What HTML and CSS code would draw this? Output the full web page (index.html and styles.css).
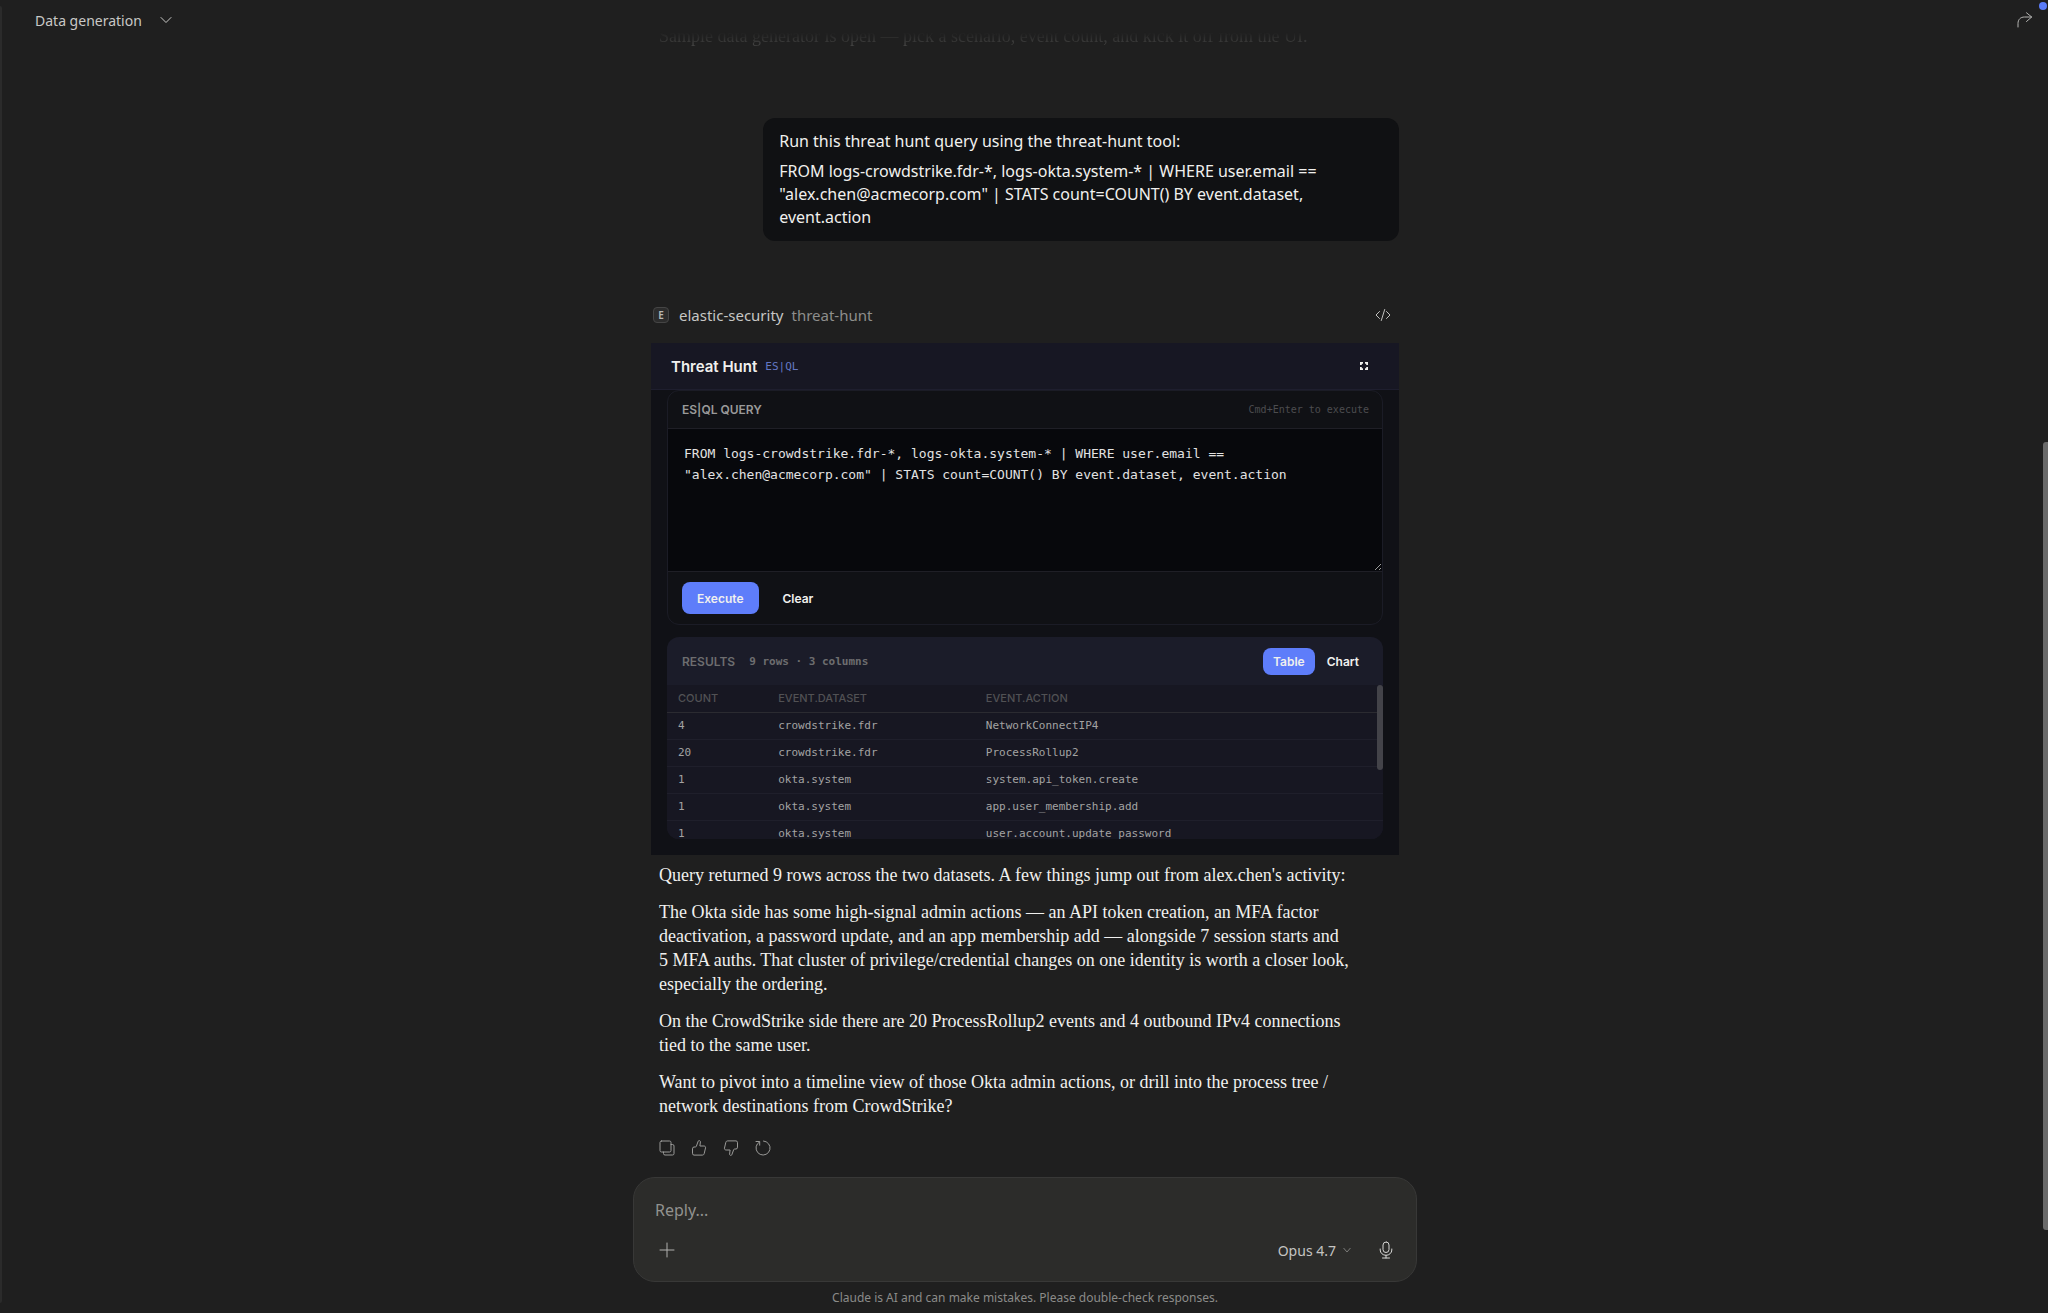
FILE: index.html
```html
<!DOCTYPE html>
<html lang="en">

<head>
  <meta charset="UTF-8">
  <meta name="viewport" content="width=device-width, initial-scale=1.0">
  <title>Data generation</title>
  <link rel="stylesheet" href="styles.css">
</head>

<body>
  <div class="sidebar-edge"></div>

  <header class="topbar">
    <button class="chat-title">
      Data generation
      <svg width="12" height="12" viewBox="0 0 12 12"><path d="M1 3.500l5 5 5-5" /></svg>
    </button>
    <button class="share" aria-label="Share">
      <svg width="16" height="16" viewBox="0 0 16 16"><path d="M1 15V11.500C1 7.500 3.500 5 7.500 5H14.500M9.500 .8L14.700 5 9.500 9.500" /></svg>
    </button>
  </header>

  <main class="thread">
    <p class="faded">Sample data generator is open — pick a scenario, event count, and kick it off from the UI.</p>

    <div class="bubble">
      <p>Run this threat hunt query using the threat-hunt tool:</p>
      <p>FROM logs-crowdstrike.fdr-*, logs-okta.system-* | WHERE user.email == "alex.chen@acmecorp.com" | STATS count=COUNT() BY event.dataset, event.action</p>
    </div>

    <div class="tool-head">
      <span class="badge">E</span>
      <span class="server">elastic-security</span>
      <span class="tool">threat-hunt</span>
      <button class="code-btn" aria-label="View code">
        <svg width="16" height="14" viewBox="0 0 16 14"><path d="M4.500 3.500L1 7l3.500 3.500M11.500 3.500L15 7l-3.500 3.500M9.700 1.500L6.300 12.500" /></svg>
      </button>
    </div>

    <section class="widget">
      <div class="widget-head">
        <h2>Threat Hunt</h2>
        <span class="lang">ES|QL</span>
        <button class="expand" aria-label="Full screen">
          <svg width="8" height="8" viewBox="0 0 8 8"><path d="M.8 3V.8H3M5 .8h2.200V3M7.200 5v2.200H5M3 7.200H.8V5" /></svg>
        </button>
      </div>

      <div class="widget-body">
        <div class="query">
          <div class="query-head">
            <label for="esql">ES|QL QUERY</label>
            <span class="hint">Cmd+Enter to execute</span>
          </div>
          <textarea id="esql" spellcheck="false">FROM logs-crowdstrike.fdr-*, logs-okta.system-* | WHERE user.email == "alex.chen@acmecorp.com" | STATS count=COUNT() BY event.dataset, event.action</textarea>
          <div class="query-foot">
            <button class="btn primary">Execute</button>
            <button class="btn">Clear</button>
          </div>
        </div>

        <div class="results">
          <div class="results-head">
            <h3>RESULTS</h3>
            <span class="meta">9 rows · 3 columns</span>
            <div class="tabs">
              <button class="tab active">Table</button>
              <button class="tab">Chart</button>
            </div>
          </div>
          <div class="table-wrap">
            <table>
              <thead>
                <tr><th class="c1">COUNT</th><th class="c2">EVENT.DATASET</th><th>EVENT.ACTION</th></tr>
              </thead>
              <tbody>
                <tr><td>4</td><td>crowdstrike.fdr</td><td>NetworkConnectIP4</td></tr>
                <tr><td>20</td><td>crowdstrike.fdr</td><td>ProcessRollup2</td></tr>
                <tr><td>1</td><td>okta.system</td><td>system.api_token.create</td></tr>
                <tr><td>1</td><td>okta.system</td><td>app.user_membership.add</td></tr>
                <tr><td>1</td><td>okta.system</td><td>user.account.update_password</td></tr>
              </tbody>
            </table>
            <div class="table-thumb"></div>
          </div>
        </div>
      </div>
    </section>

    <div class="answer">
      <p>Query returned 9 rows across the two datasets. A few things jump out from alex.chen's activity:</p>
      <p>The Okta side has some high-signal admin actions — an API token creation, an MFA factor<br>
        deactivation, a password update, and an app membership add — alongside 7 session starts and<br>
        5 MFA auths. That cluster of privilege/credential changes on one identity is worth a closer look,<br>
        especially the ordering.</p>
      <p>On the CrowdStrike side there are 20 ProcessRollup2 events and 4 outbound IPv4 connections<br>
        tied to the same user.</p>
      <p>Want to pivot into a timeline view of those Okta admin actions, or drill into the process tree /<br>
        network destinations from CrowdStrike?</p>
    </div>

    <div class="actions">
      <button aria-label="Copy">
        <svg width="16" height="16" viewBox="0 0 16 16"><rect x="1" y="1" width="11" height="11" rx="1.500" /><path d="M12 4.500h1.500a1.500 1.500 0 0 1 1.500 1.500v7.500a1.500 1.500 0 0 1-1.500 1.500H6a1.500 1.500 0 0 1-1.500-1.500V12" /></svg>
      </button>
      <button aria-label="Good response">
        <svg width="16" height="16" viewBox="0 0 16 16"><path d="M1.500 8.500A1.500 1.500 0 0 1 3 7h1.300c.5 0 .8-.2 1-.6L7 1.700C7.200.9 7.600.6 8.200.6c.8 0 1.300.6 1.200 1.400L8.900 6h4c1.200 0 1.900.9 1.600 2l-1.300 5.600c-.2.900-.9 1.500-1.900 1.500H3a1.500 1.500 0 0 1-1.500-1.500z" /></svg>
      </button>
      <button aria-label="Bad response">
        <svg width="16" height="16" viewBox="0 0 16 16"><path d="M14.500 7.500A1.500 1.500 0 0 1 13 9h-1.300c-.5 0-.8.2-1 .6L9 14.300c-.2.800-.6 1.100-1.200 1.100-.8 0-1.300-.6-1.200-1.400L7.100 10h-4c-1.200 0-1.900-.9-1.600-2l1.300-5.600C3 1.500 3.700.9 4.700.9H13a1.500 1.500 0 0 1 1.500 1.500z" /></svg>
      </button>
      <button aria-label="Retry">
        <svg width="16" height="16" viewBox="0 0 16 16"><path d="M8.500 1A7 7 0 1 1 2.300 4L4.500 2M1 1.500h3.700v3.700" /></svg>
      </button>
    </div>
  </main>

  <form class="composer">
    <input type="text" placeholder="Reply..." aria-label="Reply">
    <div class="composer-row">
      <button type="button" aria-label="Add">
        <svg width="16" height="16" viewBox="0 0 16 16"><path d="M8 1v14M1 8h14" /></svg>
      </button>
      <button type="button" class="model">
        Opus 4.7
        <svg width="8" height="8" viewBox="0 0 8 8"><path d="M.8 2.300L4 6l3.200-3.700" /></svg>
      </button>
      <button type="button" class="mic" aria-label="Voice input">
        <svg width="14" height="18" viewBox="0 0 14 18"><rect x="4" y="1" width="6" height="10.500" rx="3" /><path d="M1.200 8v1a5.800 5.300 0 0 0 11.600 0V8M7 14.300V17M3.500 17h7" /></svg>
      </button>
    </div>
  </form>
  <p class="note">Claude is AI and can make mistakes. Please double-check responses.</p>

  <div class="notice-dot"></div>
  <div class="page-thumb"></div>
</body>

</html>
```
FILE: styles.css
```css
* {
  box-sizing: border-box;
}

body {
  margin: 0;
  padding-left: 2px;
  min-height: 100vh;
  display: flex;
  flex-direction: column;
  position: relative;
  background: #1f1f1f;
  color: #f0f0ee;
  font-family: "Noto Sans", sans-serif;
  font-size: 16px;
  color-scheme: dark;
  overflow: hidden;
}

p,
h2,
h3 {
  margin: 0;
}

button {
  display: inline-flex;
  align-items: center;
  padding: 0;
  border: 0;
  background: none;
  color: inherit;
  font: inherit;
}

svg {
  display: block;
  fill: none;
  stroke: currentColor;
  stroke-linecap: round;
  stroke-linejoin: round;
}

.sidebar-edge {
  position: absolute;
  top: 6px;
  bottom: 10px;
  left: 0;
  width: 2px;
  background: #2b2b2b;
  border-radius: 0 4px 4px 0;
}

.topbar {
  display: flex;
  justify-content: space-between;
  height: 32px;
  padding: 8px 15px 0 33px;
}

.chat-title {
  gap: 18px;
  height: 24px;
  font-size: 14px;
  color: #c8c8c6;
}

.share {
  height: 24px;
  color: #b4b4b2;
}

/* conversation column */
.thread {
  flex: 1;
  width: 100%;
  max-width: 748px;
  margin: 0 auto;
  overflow: hidden;
}

.faded {
  margin-top: -8px;
  padding: 0 8px;
  font: 18px/24px "Liberation Serif", serif;
  color: #4a4a49;
  -webkit-mask-image: linear-gradient(transparent 35%, #000);
  mask-image: linear-gradient(transparent 35%, #000);
}

.bubble {
  display: flex;
  flex-direction: column;
  gap: 7px;
  width: 85%;
  margin: 70px 0 0 auto;
  padding: 12px 64px 12px 16px;
  line-height: 23px;
  background: #101113;
  border-radius: 12px;
}

.tool-head {
  display: flex;
  align-items: center;
  height: 24px;
  margin: 62px 0 16px;
  padding: 0 8px 0 2px;
  font-size: 15px;
}

.badge {
  width: 16px;
  height: 16px;
  margin-right: 10px;
  border: 1px solid #454545;
  border-radius: 4px;
  background: #2c2c2c;
  color: #b8b8b6;
  font-size: 10px;
  font-weight: 600;
  line-height: 14px;
  text-align: center;
}

.server {
  margin-right: 8px;
  color: #c6c6c4;
}

.tool {
  color: #8e8e8c;
}

.code-btn {
  margin-left: auto;
  color: #c2c2c0;
}

/* threat hunt widget */
.widget {
  background: #101116;
  font-family: Inter, sans-serif;
}

.widget-head {
  display: flex;
  align-items: center;
  gap: 8px;
  height: 47px;
  padding: 0 31px 0 20px;
  background: #171723;
  border-bottom: 1px solid #1e1e2e;
}

.widget-head h2 {
  font-size: 15px;
  font-weight: 600;
}

.lang {
  font-family: "DejaVu Sans Mono", monospace;
  font-size: 11px;
  color: #6377c4;
}

.expand {
  margin-left: auto;
}

.expand svg {
  stroke-linecap: butt;
  stroke-linejoin: miter;
  stroke-width: 2;
}

.widget-body {
  display: flex;
  flex-direction: column;
  gap: 12px;
  padding: 0 16px 16px;
}

.query {
  border: 1px solid #1b1c26;
  border-radius: 12px;
  background: #101115;
  overflow: hidden;
}

.query-head {
  display: flex;
  align-items: center;
  justify-content: space-between;
  height: 37px;
  padding: 0 13px 0 14px;
  font-size: 12px;
  font-weight: 600;
  color: #9a9a9a;
}

.hint {
  font-family: "DejaVu Sans Mono", monospace;
  font-size: 10px;
  font-weight: 400;
  color: #4c4c4f;
}

.query textarea {
  display: block;
  width: 100%;
  height: 144px;
  padding: 14px 16px;
  border: 1px solid #1f1f26;
  border-width: 1px 0;
  outline: 0;
  resize: vertical;
  background: #07080c;
  color: #e2e2e2;
  font: 13px/21px "DejaVu Sans Mono", monospace;
}

.query-foot {
  display: flex;
  gap: 9px;
  padding: 10px 14px;
}

.btn {
  height: 32px;
  padding: 0 15px;
  border-radius: 8px;
  font-size: 12px;
  font-weight: 600;
}

.primary,
.active {
  background: #5e7dfa;
}

.results {
  border-radius: 12px;
  background: #1b1c29;
  overflow: hidden;
}

.results-head {
  display: flex;
  align-items: center;
  gap: 14px;
  height: 48px;
  padding: 0 14px 0 15px;
  color: #6d6d6f;
}

.results-head h3 {
  font-size: 12px;
  font-weight: 600;
}

.meta {
  font-family: "DejaVu Sans Mono", monospace;
  font-size: 11px;
  font-weight: 700;
}

.tabs {
  display: flex;
  gap: 2px;
  margin-left: auto;
  color: #f0f0ee;
}

.tab {
  height: 27px;
  padding: 0 10px;
  border-radius: 8px;
  font-size: 12px;
  font-weight: 600;
}

.table-wrap {
  position: relative;
  height: 154px;
  background: #171722;
  overflow: hidden;
}

table {
  width: 100%;
  table-layout: fixed;
  border-collapse: collapse;
}

th,
td {
  height: 27px;
  padding: 0 11px;
  border-bottom: 1px solid #1f1f2b;
  text-align: left;
}

th {
  border-bottom-color: #2b2b31;
  font-size: 11px;
  font-weight: 500;
  color: #515154;
}

td {
  font-family: "DejaVu Sans Mono", monospace;
  font-size: 11px;
  color: #a3a3a2;
}

.c1 {
  width: 14%;
}

.c2 {
  width: 29%;
}

.table-thumb {
  position: absolute;
  top: 0;
  right: 0;
  width: 6px;
  height: 85px;
  border-radius: 3px;
  background: #434349;
}

/* reply text */
.answer {
  display: flex;
  flex-direction: column;
  gap: 13px;
  padding: 8px 8px 0;
  font: 18px/24px "Liberation Serif", serif;
}

.actions {
  display: flex;
  gap: 16px;
  margin-top: 22px;
  padding: 0 8px;
  color: #9a9a98;
}

/* composer */
.composer {
  width: 100%;
  max-width: 784px;
  height: 105px;
  margin: 0 auto;
  padding: 19px 21px 0;
  border: 1px solid #383837;
  border-radius: 22px;
  background: #2c2c2a;
}

.composer input {
  display: block;
  width: 100%;
  height: 26px;
  padding: 0;
  border: 0;
  outline: 0;
  background: none;
  color: #f0f0ee;
  font: inherit;
}

.composer input::placeholder {
  color: #92928f;
}

.composer-row {
  display: flex;
  align-items: center;
  height: 20px;
  margin-top: 17px;
  padding: 0 2px 0 4px;
  color: #b0b0ae;
}

.model {
  gap: 7px;
  margin: 0 28px 0 auto;
  font-size: 14px;
  color: #c4c4c2;
}

.model svg {
  color: #7c7c7a;
}

.mic {
  color: #d6d6d4;
}

.note {
  font-size: 12px;
  line-height: 31px;
  text-align: center;
  color: #8b8b89;
}

.notice-dot {
  position: absolute;
  top: 2px;
  right: 1px;
  width: 8px;
  height: 8px;
  border-radius: 50%;
  background: #5b7cf7;
}

.page-thumb {
  position: absolute;
  top: 442px;
  bottom: 83px;
  right: 0;
  width: 5px;
  border-radius: 3px 0 0 3px;
  background: #6a6a6a;
}
```
